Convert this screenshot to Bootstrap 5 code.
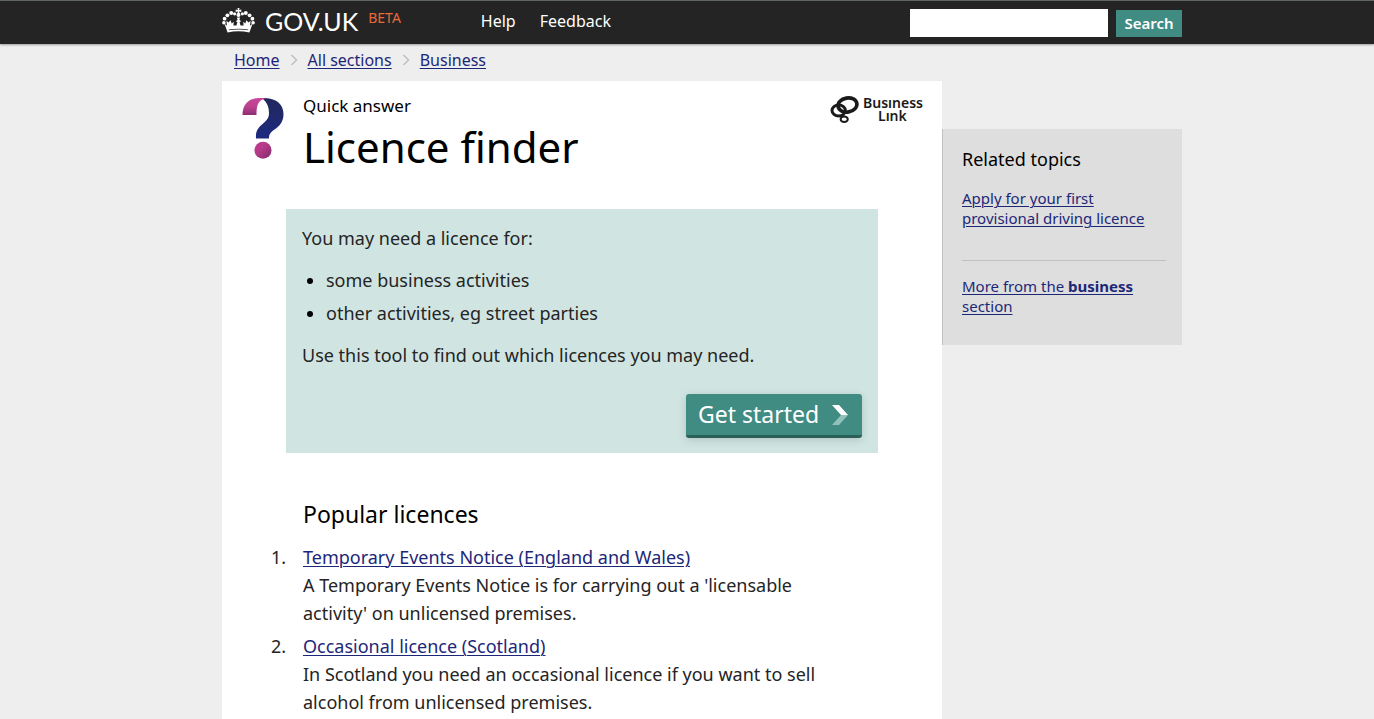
<!DOCTYPE html>
<html lang="en">
<head>
<meta charset="utf-8">
<meta name="viewport" content="width=device-width, initial-scale=1">
<title>Licence finder - GOV.UK</title>
<link href="https://cdn.jsdelivr.net/npm/bootstrap@5.3.0/dist/css/bootstrap.min.css" rel="stylesheet">
<style>
  body { font-family: "Noto Sans", sans-serif; font-size: 18px; line-height: 28px; color: #242424; background: #eee; }
  a { color: #1d2778; text-underline-offset: 2px; text-decoration-thickness: 1px; }
  .site-wrap { max-width: 990px; padding-left: 30px; }
  .site-header { background: #242424; border-top: 1px solid #5e6464; box-shadow: 0 1px 2px rgba(0,0,0,.35); }
  .header-row { min-height: 43px; }
  .header-left { padding-bottom: 4px; }
  .site-name { font: 25px/26px Lato, sans-serif; color: #fff; margin-left: 10px; }
  .beta-tag { font: 14px/16px "Noto Sans", sans-serif; color: #e8693a; margin: 0 80px 5px 10px; }
  .header-link { font-size: 16px; color: #fff; margin-right: 24px; }
  .search-field { width: 198px; height: 28px; border: 0; border-radius: 0; padding: 0 6px; }
  .search-btn { background: #408c83; color: #fff; border: 0; border-radius: 0; font: 600 15px/27px "Noto Sans", sans-serif; width: 66px; padding: 0; margin: 1px 0 0 8px; }
  .crumbs { font-size: 16px; line-height: 20px; padding: 6px 12px 11px; }
  .crumbs svg { margin: 0 10px 1px; }
  .article { background: #fff; flex: 0 1 720px; min-height: calc(100vh - 81px); }
  .article-head { padding: 14px 18px 0 20px; }
  .question-icon { margin: 3px 19px 0 0; }
  .kicker { font-size: 17px; line-height: 22px; color: #000; }
  .page-title { font-size: 42px; line-height: 52px; font-weight: 400; color: #000; margin-top: 4px; }
  .intro { background: #d0e5e2; margin: 36px 64px 0; padding: 15px 16px; }
  .intro p { margin-bottom: 14px; }
  .intro ul { padding-left: 24px; margin-bottom: 14px; }
  .intro li::marker { color: #000; }
  .intro li + li, .licences li + li { margin-top: 5px; }
  .start-btn { background: #408c83; color: #fff; font-size: 23px; line-height: 41px; border: 0; border-bottom: 3px solid #2b6059; border-radius: 3px; padding: 0 14px 0 12px; box-shadow: 0 2px 8px rgba(0,0,0,.15); width: 176px; margin-top: 11px; }
  .popular { margin: 45px 81px 0; }
  .popular h2 { font-size: 23px; line-height: 32px; font-weight: 400; color: #000; margin-bottom: 13px; }
  .licences { list-style: none; counter-reset: licence; padding: 0 24px 0 0; margin: 0; }
  .licences li { counter-increment: licence; display: flex; margin-left: -40px; }
  .licences li::before { content: counter(licence) "."; flex: 0 0 23px; margin-right: 17px; text-align: right; }
  .related { background: #dedede; border-left: 1px solid #bfc1c3; flex: 0 0 240px; margin-top: 48px; padding: 18px 16px 29px 19px; font-size: 15px; line-height: 20px; }
  .related h2 { font-size: 18px; line-height: 24px; font-weight: 400; color: #000; margin-bottom: 17px; }
  .related .more { border-top: 1px solid #bfc1c3; margin-top: 32px; padding-top: 15px; }
</style>
</head>
<body>
<header class="site-header">
  <div class="site-wrap header-row mx-auto d-flex align-items-center">
    <div class="header-left d-flex align-items-center">
      <a href="#" class="d-flex align-items-center text-decoration-none" aria-label="GOV.UK home">
        <svg width="33" height="25" viewBox="0 0 33 25" fill="#fff" aria-hidden="true">
          <path d="M15.500 0h2l-.4 2 2.200-.5v2.600l-2.200-.5.6 2.400h-2.400l.6-2.400-2.200.5V1.500l2.200.5z"/>
          <circle cx="16.500" cy="7" r="2"/>
          <circle cx="12.600" cy="5.800" r="1.600"/><circle cx="9.200" cy="5" r="2"/><circle cx="5.400" cy="7.300" r="1.900"/><circle cx="2.600" cy="10.700" r="1.900"/><circle cx="1.900" cy="14.700" r="1.800"/>
          <circle cx="20.400" cy="5.800" r="1.600"/><circle cx="23.800" cy="5" r="2"/><circle cx="27.600" cy="7.300" r="1.900"/><circle cx="30.400" cy="10.700" r="1.900"/><circle cx="31.100" cy="14.700" r="1.800"/>
          <path fill-rule="evenodd" d="M2.400 15.500l2.600 2.300-.6-5 2.100 1.700 2.100-2.300 1.100 3.300 2-1.700-.3 3.700 3.100.1.900-3.600-1.600-.8 1.700-1.200-.5-2.400h3l-.5 2.400 1.700 1.200-1.600.8.900 3.600 3.100-.1-.3-3.700 2 1.700 1.100-3.300 2.100 2.300 2.100-1.700-.6 5 2.600-2.300L27.400 24.400c-7-1.500-14.800-1.500-21.800 0zM6.800 21.400v.9c6.400-1.100 13-1.100 19.400 0v-.9c-6.400-1-13-1-19.400 0z"/>
        </svg>
        <span class="site-name">GOV.UK</span>
      </a>
      <span class="beta-tag">BETA</span>
      <nav class="d-flex" aria-label="Site">
        <a class="header-link text-decoration-none" href="#">Help</a>
        <a class="header-link text-decoration-none" href="#">Feedback</a>
      </nav>
    </div>
    <form class="d-flex ms-auto" role="search">
      <input class="search-field form-control" type="text" aria-label="Search GOV.UK">
      <button class="search-btn" type="submit">Search</button>
    </form>
  </div>
</header>
<div class="site-wrap mx-auto">
  <nav class="crumbs d-flex align-items-center" aria-label="Breadcrumb">
    <a href="#">Home</a>
    <svg width="8" height="12" viewBox="0 0 8 12" fill="none" stroke="#bfc1c3" stroke-width="1.600"><path d="M1.500 1l5 5-5 5"/></svg>
    <a href="#">All sections</a>
    <svg width="8" height="12" viewBox="0 0 8 12" fill="none" stroke="#bfc1c3" stroke-width="1.600"><path d="M1.500 1l5 5-5 5"/></svg>
    <a href="#">Business</a>
  </nav>
  <div class="d-flex align-items-start">
    <main class="article">
      <header class="article-head d-flex">
        <svg class="question-icon flex-shrink-0" width="42" height="61" viewBox="0 0 42 61" aria-hidden="true">
          <defs>
            <linearGradient id="pk" x2="0" y2="1"><stop stop-color="#c9479a"/><stop offset=".5" stop-color="#bd4291"/><stop offset="1" stop-color="#8b2f72"/></linearGradient>
            <linearGradient id="bl" x2="0" y2="1"><stop stop-color="#22285c"/><stop offset="1" stop-color="#1d2a80"/></linearGradient>
            <linearGradient id="dt" x2="1" y2="1"><stop offset=".4" stop-color="#b83a88"/><stop offset="1" stop-color="#7d2b6b"/></linearGradient>
          </defs>
          <path fill="url(#bl)" d="M20 0c14-.5 21.500 6 21.500 16 0 8-4 12-9 15.500-4 3-5.500 4.500-5.500 9H14c-.5-7 1.500-10 6-14 5-4.500 7-6.500 7-11.500 0-6-2-10.500-6-14z"/>
          <path fill="url(#pk)" d="M.5 17C.5 7 6 0 17 0h8c-2 .3-3.500 1-5 1.700C15.500 4 14.500 9 14.500 17z"/>
          <circle cx="21" cy="52.300" r="8.500" fill="url(#dt)"/>
        </svg>
        <div>
          <div class="kicker">Quick answer</div>
          <h1 class="page-title mb-0">Licence finder</h1>
        </div>
        <svg class="ms-auto" width="94" height="30" viewBox="0 0 94 30" role="img" aria-label="Business Link">
          <g fill="none" stroke="#1a1a1a"><ellipse cx="17.500" cy="10" rx="9.500" ry="7" stroke-width="3.600" transform="rotate(-10 17.500 10)"/><ellipse cx="8.700" cy="15.500" rx="6.700" ry="5.500" stroke-width="3"/><ellipse cx="14.200" cy="24.200" rx="3.600" ry="2.800" stroke-width="2"/></g>
          <g fill="#1a1a1a" font-family="Noto Sans, sans-serif" font-weight="600" font-size="14"><text x="33" y="13">Busıness</text><text x="48" y="26">Lınk</text></g>
        </svg>
      </header>
      <section class="intro">
        <p>You may need a licence for:</p>
        <ul>
          <li>some business activities</li>
          <li>other activities, eg street parties</li>
        </ul>
        <p>Use this tool to find out which licences you may need.</p>
        <div class="d-flex justify-content-end">
          <button type="button" class="start-btn d-flex align-items-center justify-content-between">Get started
            <svg width="16" height="20" viewBox="0 0 16 20" aria-hidden="true"><path fill="#fff" d="M0 0h7l9 10H9z"/><path fill="#8fc0b9" d="M9 10h7l-9 10H0z"/></svg>
          </button>
        </div>
      </section>
      <section class="popular">
        <h2>Popular licences</h2>
        <ol class="licences">
          <li><div><a href="#">Temporary Events Notice (England and Wales)</a><br>A Temporary Events Notice is for carrying out a 'licensable activity' on unlicensed premises.</div></li>
          <li><div><a href="#">Occasional licence (Scotland)</a><br>In Scotland you need an occasional licence if you want to sell alcohol from unlicensed premises.</div></li>
        </ol>
      </section>
    </main>
    <aside class="related">
      <h2>Related topics</h2>
      <a href="#">Apply for your first provisional driving licence</a>
      <div class="more"><a href="#">More from the <strong>business</strong> section</a></div>
    </aside>
  </div>
</div>
<script src="https://cdn.jsdelivr.net/npm/bootstrap@5.3.0/dist/js/bootstrap.bundle.min.js"></script>
</body>
</html>
